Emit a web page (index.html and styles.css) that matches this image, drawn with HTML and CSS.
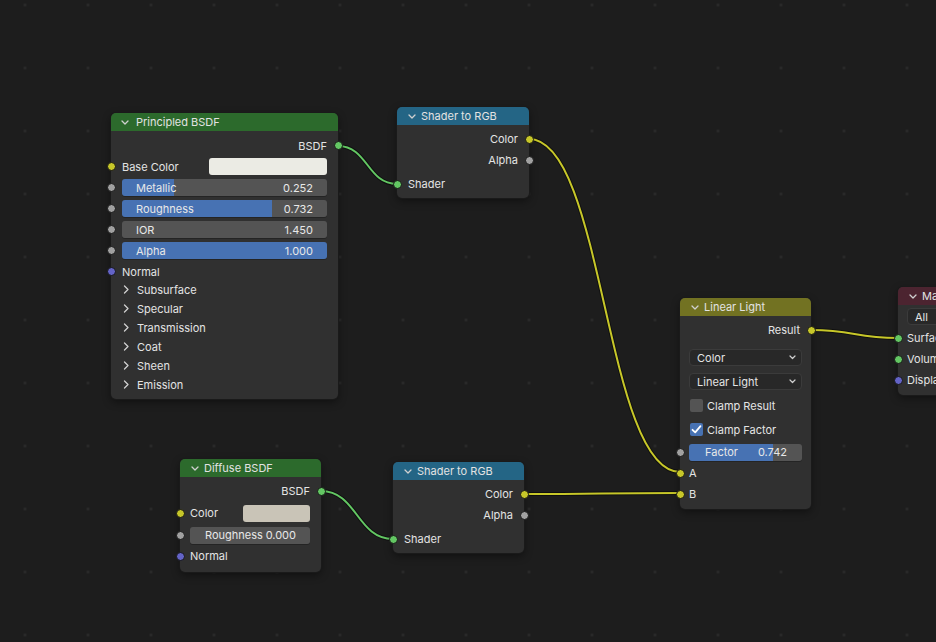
FILE: index.html
```html
<!DOCTYPE html>
<html>
<head>
<meta charset="utf-8">
<link rel="stylesheet" href="styles.css">
</head>
<body>
<div class="canvas">
  <svg class="links" width="936" height="642" viewBox="0 0 936 642">
    <g fill="none" stroke-linecap="round">
      <path class="lk-shadow" d="M338,146 C368,146 367,184 397,184"/>
      <path class="lk-shadow" d="M321,491 C357,491 357,539 393,539"/>
      <path class="lk-shadow" d="M529,139 C604,139 605,472 680,472"/>
      <path class="lk-shadow" d="M524,494 C602,494 602,493 680,493"/>
      <path class="lk-shadow" d="M811,330 C855,330 854,338 898,338"/>
      <path class="lk-green" d="M338,146 C368,146 367,184 397,184"/>
      <path class="lk-green" d="M321,491 C357,491 357,539 393,539"/>
      <path class="lk-yellow" d="M529,139 C604,139 605,472 680,472"/>
      <path class="lk-yellow" d="M524,494 C602,494 602,493 680,493"/>
      <path class="lk-yellow" d="M811,330 C855,330 854,338 898,338"/>
    </g>
  </svg>

  <!-- Principled BSDF -->
  <div class="node n-principled">
    <div class="head h-shader">
      <svg class="chev-down" width="8" height="5" viewBox="0 0 8 5"><path d="M1,1 L4,4 L7,1"/></svg>
      <span>Principled BSDF</span>
    </div>
    <div class="body b-principled">
      <div class="row out"><span>BSDF</span><i class="sock sock-out s-green"></i></div>
      <div class="row"><i class="sock sock-in s-yellow"></i><span class="lbl grow">Base Color</span><span class="swatch sw-base"></span></div>
      <div class="row"><i class="sock sock-in s-gray"></i><div class="slider" style="--v:25.2%"><span>Metallic</span><span>0.252</span></div></div>
      <div class="row"><i class="sock sock-in s-gray"></i><div class="slider" style="--v:73.2%"><span>Roughness</span><span>0.732</span></div></div>
      <div class="row"><i class="sock sock-in s-gray"></i><div class="slider" style="--v:0%"><span>IOR</span><span>1.450</span></div></div>
      <div class="row"><i class="sock sock-in s-gray"></i><div class="slider" style="--v:100%"><span>Alpha</span><span>1.000</span></div></div>
      <div class="row"><i class="sock sock-in s-purple"></i><span class="lbl">Normal</span></div>
      <div class="panels">
        <div class="prow"><svg class="chev-right" width="6" height="9" viewBox="0 0 6 9"><path d="M1.5,1 L5,4.5 L1.5,8"/></svg><span>Subsurface</span></div>
        <div class="prow"><svg class="chev-right" width="6" height="9" viewBox="0 0 6 9"><path d="M1.5,1 L5,4.5 L1.5,8"/></svg><span>Specular</span></div>
        <div class="prow"><svg class="chev-right" width="6" height="9" viewBox="0 0 6 9"><path d="M1.5,1 L5,4.5 L1.5,8"/></svg><span>Transmission</span></div>
        <div class="prow"><svg class="chev-right" width="6" height="9" viewBox="0 0 6 9"><path d="M1.5,1 L5,4.5 L1.5,8"/></svg><span>Coat</span></div>
        <div class="prow"><svg class="chev-right" width="6" height="9" viewBox="0 0 6 9"><path d="M1.5,1 L5,4.5 L1.5,8"/></svg><span>Sheen</span></div>
        <div class="prow"><svg class="chev-right" width="6" height="9" viewBox="0 0 6 9"><path d="M1.5,1 L5,4.5 L1.5,8"/></svg><span>Emission</span></div>
      </div>
    </div>
  </div>

  <!-- Shader to RGB (top) -->
  <div class="node n-s2rgb-a">
    <div class="head h-conv">
      <svg class="chev-down" width="8" height="5" viewBox="0 0 8 5"><path d="M1,1 L4,4 L7,1"/></svg>
      <span>Shader to RGB</span>
    </div>
    <div class="body b-std">
      <div class="row out"><span>Color</span><i class="sock sock-out s-yellow"></i></div>
      <div class="row out"><span>Alpha</span><i class="sock sock-out s-gray"></i></div>
      <div class="gap3"></div>
      <div class="row"><i class="sock sock-in s-green"></i><span class="lbl">Shader</span></div>
    </div>
  </div>

  <!-- Shader to RGB (bottom) -->
  <div class="node n-s2rgb-b">
    <div class="head h-conv">
      <svg class="chev-down" width="8" height="5" viewBox="0 0 8 5"><path d="M1,1 L4,4 L7,1"/></svg>
      <span>Shader to RGB</span>
    </div>
    <div class="body b-std">
      <div class="row out"><span>Color</span><i class="sock sock-out s-yellow"></i></div>
      <div class="row out"><span>Alpha</span><i class="sock sock-out s-gray"></i></div>
      <div class="gap3"></div>
      <div class="row"><i class="sock sock-in s-green"></i><span class="lbl">Shader</span></div>
    </div>
  </div>

  <!-- Diffuse BSDF -->
  <div class="node n-diffuse">
    <div class="head h-shader">
      <svg class="chev-down" width="8" height="5" viewBox="0 0 8 5"><path d="M1,1 L4,4 L7,1"/></svg>
      <span>Diffuse BSDF</span>
    </div>
    <div class="body b-diffuse">
      <div class="row out"><span>BSDF</span><i class="sock sock-out s-green"></i></div>
      <div class="row row23"><i class="sock sock-in s-yellow"></i><span class="lbl grow">Color</span><span class="swatch sw-diffuse"></span></div>
      <div class="row"><i class="sock sock-in s-gray"></i><div class="slider" style="--v:0%"><span>Roughness</span><span>0.000</span></div></div>
      <div class="row"><i class="sock sock-in s-purple"></i><span class="lbl">Normal</span></div>
    </div>
  </div>

  <!-- Linear Light -->
  <div class="node n-mix">
    <div class="head h-color">
      <svg class="chev-down" width="8" height="5" viewBox="0 0 8 5"><path d="M1,1 L4,4 L7,1"/></svg>
      <span>Linear Light</span>
    </div>
    <div class="body b-mix">
      <div class="row out"><span>Result</span><i class="sock sock-out s-yellow"></i></div>
      <div class="gap5"></div>
      <div class="row row24"><div class="dropdown"><span>Color</span><svg class="chev-dd" width="7" height="5" viewBox="0 0 7 5"><path d="M1,1 L3.5,3.5 L6,1"/></svg></div></div>
      <div class="row row24"><div class="dropdown"><span>Linear Light</span><svg class="chev-dd" width="7" height="5" viewBox="0 0 7 5"><path d="M1,1 L3.5,3.5 L6,1"/></svg></div></div>
      <div class="row row24"><span class="check"></span><span class="lbl">Clamp Result</span></div>
      <div class="row row24"><span class="check on"><svg width="13" height="13" viewBox="0 0 13 13"><path d="M2.5,6.8 L5.2,9.4 L10.5,3.2"/></svg></span><span class="lbl">Clamp Factor</span></div>
      <div class="row"><i class="sock sock-in s-gray"></i><div class="slider slider-f" style="--v:74.2%"><span>Factor</span><span>0.742</span></div></div>
      <div class="row"><i class="sock sock-in s-yellow"></i><span class="lbl">A</span></div>
      <div class="row"><i class="sock sock-in s-yellow"></i><span class="lbl">B</span></div>
    </div>
  </div>

  <!-- Material Output -->
  <div class="node n-output">
    <div class="head h-output">
      <svg class="chev-down" width="8" height="5" viewBox="0 0 8 5"><path d="M1,1 L4,4 L7,1"/></svg>
      <span>Material Output</span>
    </div>
    <div class="body b-output">
      <div class="row row22"><div class="dropdown dd-all"><span>All</span></div></div>
      <div class="row"><i class="sock sock-in s-green"></i><span class="lbl">Surface</span></div>
      <div class="row"><i class="sock sock-in s-green"></i><span class="lbl">Volume</span></div>
      <div class="row"><i class="sock sock-in s-purple"></i><span class="lbl">Displacement</span></div>
    </div>
  </div>
</div>
</body>
</html>
```

FILE: styles.css
```css
html, body {
  margin: 0;
  padding: 0;
  width: 936px;
  height: 642px;
  overflow: hidden;
  background: #1d1d1d;
}

.canvas {
  position: relative;
  width: 936px;
  height: 642px;
  overflow: hidden;
  background-color: #1d1d1d;
  background-image: radial-gradient(circle, #2a2a2a 0, #2a2a2a 1.2px, rgba(29,29,29,0) 1.8px);
  background-size: 63px 63px;
  background-position: 56.5px 36.5px;
  font-family: Inter, "Noto Sans", "DejaVu Sans", sans-serif;
  font-size: 11px;
  color: #e4e4e4;
}

.links {
  position: absolute;
  left: 0;
  top: 0;
}
.lk-shadow { stroke: rgba(0,0,0,0.45); stroke-width: 4; }
.lk-green { stroke: #63c763; stroke-width: 2; }
.lk-yellow { stroke: #c7c729; stroke-width: 2; }

/* nodes */
.node {
  position: absolute;
  background: #303030;
  border-radius: 5px;
  box-shadow: 0 0 0 1px #1a1a1a, 0 3px 8px rgba(0,0,0,0.45);
}
.n-principled { left: 111px; top: 113px; width: 227px; }
.n-s2rgb-a { left: 397px; top: 107px; width: 132px; }
.n-s2rgb-b { left: 393px; top: 462px; width: 131px; }
.n-diffuse { left: 180px; top: 459px; width: 141px; }
.n-mix { left: 680px; top: 298px; width: 131px; }
.n-output { left: 898px; top: 287px; width: 140px; }

.head {
  height: 18px;
  display: flex;
  align-items: center;
  padding-left: 10px;
  gap: 7px;
  border-radius: 5px 5px 0 0;
  color: #e2e2e2;
  white-space: nowrap;
}
.n-s2rgb-a .head, .n-s2rgb-b .head, .n-mix .head, .n-output .head, .n-diffuse .head { padding-left: 11px; gap: 5px; }
.h-shader { background: #2c6a2c; }
.h-conv { background: #246585; }
.h-color { background: #727222; }
.h-output { background: #4c2430; }

.chev-down path, .chev-right path, .chev-dd path {
  fill: none;
  stroke: #d0d0d0;
  stroke-width: 1.3;
  stroke-linecap: round;
  stroke-linejoin: round;
}
.chev-dd path { stroke: #cfcfcf; stroke-width: 1.2; }

.body { display: flex; flex-direction: column; }
.b-principled { padding: 4px 0 5px; }
.b-std { padding: 3.5px 0 3.5px; }
.b-diffuse { padding: 3.5px 0 5px; }
.b-mix { padding: 3.5px 0 4px; }
.b-output { padding: 0.5px 0 4.5px; }

.row {
  position: relative;
  height: 21px;
  display: flex;
  align-items: center;
  padding: 0 11px;
  white-space: nowrap;
}
.row23 { height: 23px; }
.row24 { height: 24px; }
.row22 { height: 22px; }
.n-mix .row, .n-output .row { padding: 0 9px; }
.n-mix .row.out { padding-right: 11px; }
.n-output .row { padding-left: 9px; }
.n-diffuse .row { padding: 0 11px 0 10px; }
.row.out { justify-content: flex-end; }
.lbl { color: #e4e4e4; }
.grow { flex: 1; }

.gap3 { height: 3px; }
.gap5 { height: 5px; }

.sock {
  position: absolute;
  width: 7px;
  height: 7px;
  border: 1px solid #151515;
  border-radius: 50%;
  top: calc(50% - 4.5px);
}
.sock-in { left: -4.5px; }
.sock-out { right: -4.5px; }
.s-green { background: #63c763; }
.s-yellow { background: #c7c729; }
.s-gray { background: #a1a1a1; }
.s-purple { background: #6363c7; }

.swatch {
  height: 17px;
  border-radius: 3px;
}
.sw-base { width: 118px; background: #ebebe4; }
.sw-diffuse { width: 67px; background: #c9c4b7; }

.slider {
  flex: 1;
  height: 17px;
  border-radius: 3px;
  display: flex;
  align-items: center;
  justify-content: space-between;
  padding: 0 14px;
  background: linear-gradient(to right, #4772b3 0, #4772b3 var(--v), #545454 var(--v), #545454 100%);
  color: #e8e8e8;
  box-shadow: 0 1px 0 rgba(0,0,0,0.25);
}
.slider-f { padding: 0 15px 0 16px; }
.n-diffuse .slider { padding: 0 14px 0 15px; }

.prow {
  height: 19px;
  display: flex;
  align-items: center;
  padding-left: 12px;
  gap: 8px;
  white-space: nowrap;
}
.panels { margin-top: -2px; display: flex; flex-direction: column; }

.dropdown {
  flex: 1;
  height: 15px;
  border: 1px solid #3b3b3b;
  background: #282828;
  border-radius: 4px;
  display: flex;
  align-items: center;
  justify-content: space-between;
  padding: 0 5px 0 7px;
}
.dd-all { padding-left: 7px; }

.check {
  width: 13px;
  height: 13px;
  border-radius: 2px;
  background: #545454;
  margin: 0 4px 0 1px;
  display: flex;
}
.check.on { background: #4772b3; }
.check svg path {
  fill: none;
  stroke: #ffffff;
  stroke-width: 1.8;
  stroke-linecap: round;
  stroke-linejoin: round;
}
```
